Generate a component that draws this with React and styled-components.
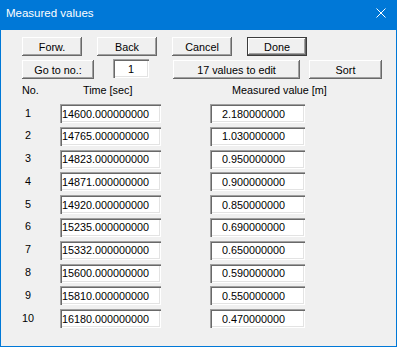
import { Fragment } from "react";
import styled, { createGlobalStyle } from "styled-components";

const GlobalStyle = createGlobalStyle`
  html, body {
    margin: 0;
    padding: 0;
    background: #ffffff;
  }
  body {
    font-family: "Liberation Sans", Arial, sans-serif;
  }
`;

const times = [
  "14600.000000000",
  "14765.000000000",
  "14823.000000000",
  "14871.000000000",
  "14920.000000000",
  "15235.000000000",
  "15332.000000000",
  "15600.000000000",
  "15810.000000000",
  "16180.000000000",
];

const values = [
  "2.180000000",
  "1.030000000",
  "0.950000000",
  "0.900000000",
  "0.850000000",
  "0.690000000",
  "0.650000000",
  "0.590000000",
  "0.550000000",
  "0.470000000",
];

const Window = styled.div`
  width: 397px;
  height: 347px;
  box-sizing: border-box;
  background: #0078d7;
  padding: 0 1px 1px 1px;
  display: flex;
  flex-direction: column;
`;

const TitleBar = styled.div`
  height: 30px;
  flex: none;
  display: flex;
  align-items: flex-start;
  justify-content: space-between;
  padding: 5px 10px 0 5px;
  box-sizing: border-box;
  color: #ffffff;
  font-size: 11.5px;
  line-height: 16px;
`;

const CloseIcon = styled.svg`
  margin-top: 3px;
  display: block;
`;

const Client = styled.div`
  flex: 1;
  background: #f0f0f0;
  padding: 7px 0 0 21px;
  font-size: 10.8px;
  color: #000000;
`;

const ButtonRow = styled.div`
  display: flex;
  align-items: flex-start;
  gap: ${(p) => p.$gap || 0}px;
  margin-top: ${(p) => p.$top || 0}px;
`;

const Button = styled.div`
  width: ${(p) => p.$w}px;
  height: 19px;
  margin-left: ${(p) => p.$ml || 0}px;
  box-sizing: border-box;
  display: flex;
  align-items: center;
  justify-content: center;
  background: #f0f0f0;
  white-space: nowrap;
  box-shadow: ${(p) =>
    p.$default
      ? "inset 0 0 0 1px #3c3c3c, inset -2px -2px #696969, inset 2px 2px #ffffff, inset -3px -3px #a0a0a0"
      : "inset -1px -1px #696969, inset 1px 1px #ffffff, inset -2px -2px #a0a0a0, inset 2px 2px #f0f0f0"};
`;

const Field = styled.input`
  width: ${(p) => p.$w}px;
  height: 19px;
  margin: ${(p) => p.$mt || 0}px 0 0 ${(p) => p.$ml || 0}px;
  box-sizing: border-box;
  border: none;
  outline: none;
  background: #ffffff;
  padding: 0 0 0 ${(p) => p.$pl || 0}px;
  font-family: "Liberation Sans", Arial, sans-serif;
  font-size: 10.8px;
  color: #000000;
  text-align: ${(p) => p.$align || "left"};
  box-shadow: inset 1px 1px #a0a0a0, inset 2px 2px #696969,
    inset -1px -1px #ffffff, inset -2px -2px #e3e3e3;
`;

const Table = styled.div`
  display: grid;
  grid-template-columns: 38px 101px 144px;
  margin-top: 4px;
  align-items: center;
`;

const Header = styled.div`
  height: 14px;
  line-height: 14px;
  padding-left: ${(p) => p.$pl || 0}px;
  white-space: nowrap;
  margin-bottom: 7px;
`;

const Rows = styled.div`
  grid-column: 1 / -1;
  display: grid;
  grid-template-columns: 38px 101px 144px;
  row-gap: 3.8px;
  align-items: center;
`;

const Num = styled.div`
  width: 12px;
  text-align: center;
  margin-top: -2px;
`;

export default function App() {
  return (
    <>
      <GlobalStyle />
      <Window>
        <TitleBar>
          <span>Measured values</span>
          <CloseIcon width="10" height="10" viewBox="0 0 10 10">
            <path d="M0.5 0.5 L9.5 9.5 M9.5 0.5 L0.5 9.5" stroke="#ffffff" strokeWidth="1" />
          </CloseIcon>
        </TitleBar>
        <Client>
          <ButtonRow $gap={15}>
            <Button $w={60}>Forw.</Button>
            <Button $w={60}>Back</Button>
            <Button $w={60}>Cancel</Button>
            <Button $w={60} $default>
              Done
            </Button>
          </ButtonRow>
          <ButtonRow $top={4}>
            <Button $w={72}>Go to no.:</Button>
            <Field $w={36} $ml={19} $mt={-1} $align="center" readOnly value="1" />
            <Button $w={127} $ml={24}>17 values to edit</Button>
            <Button $w={73} $ml={9}>Sort</Button>
          </ButtonRow>
          <Table>
            <Header>No.</Header>
            <Header $pl={23}>Time [sec]</Header>
            <Header $pl={71}>Measured value [m]</Header>
            <Rows>
              {times.map((t, i) => (
                <Fragment key={i}>
                  <Num>{i + 1}</Num>
                  <Field $w={101} $pl={2} readOnly value={t} />
                  <Field $w={95} $ml={49} $pl={12} readOnly value={values[i]} />
                </Fragment>
              ))}
            </Rows>
          </Table>
        </Client>
      </Window>
    </>
  );
}
